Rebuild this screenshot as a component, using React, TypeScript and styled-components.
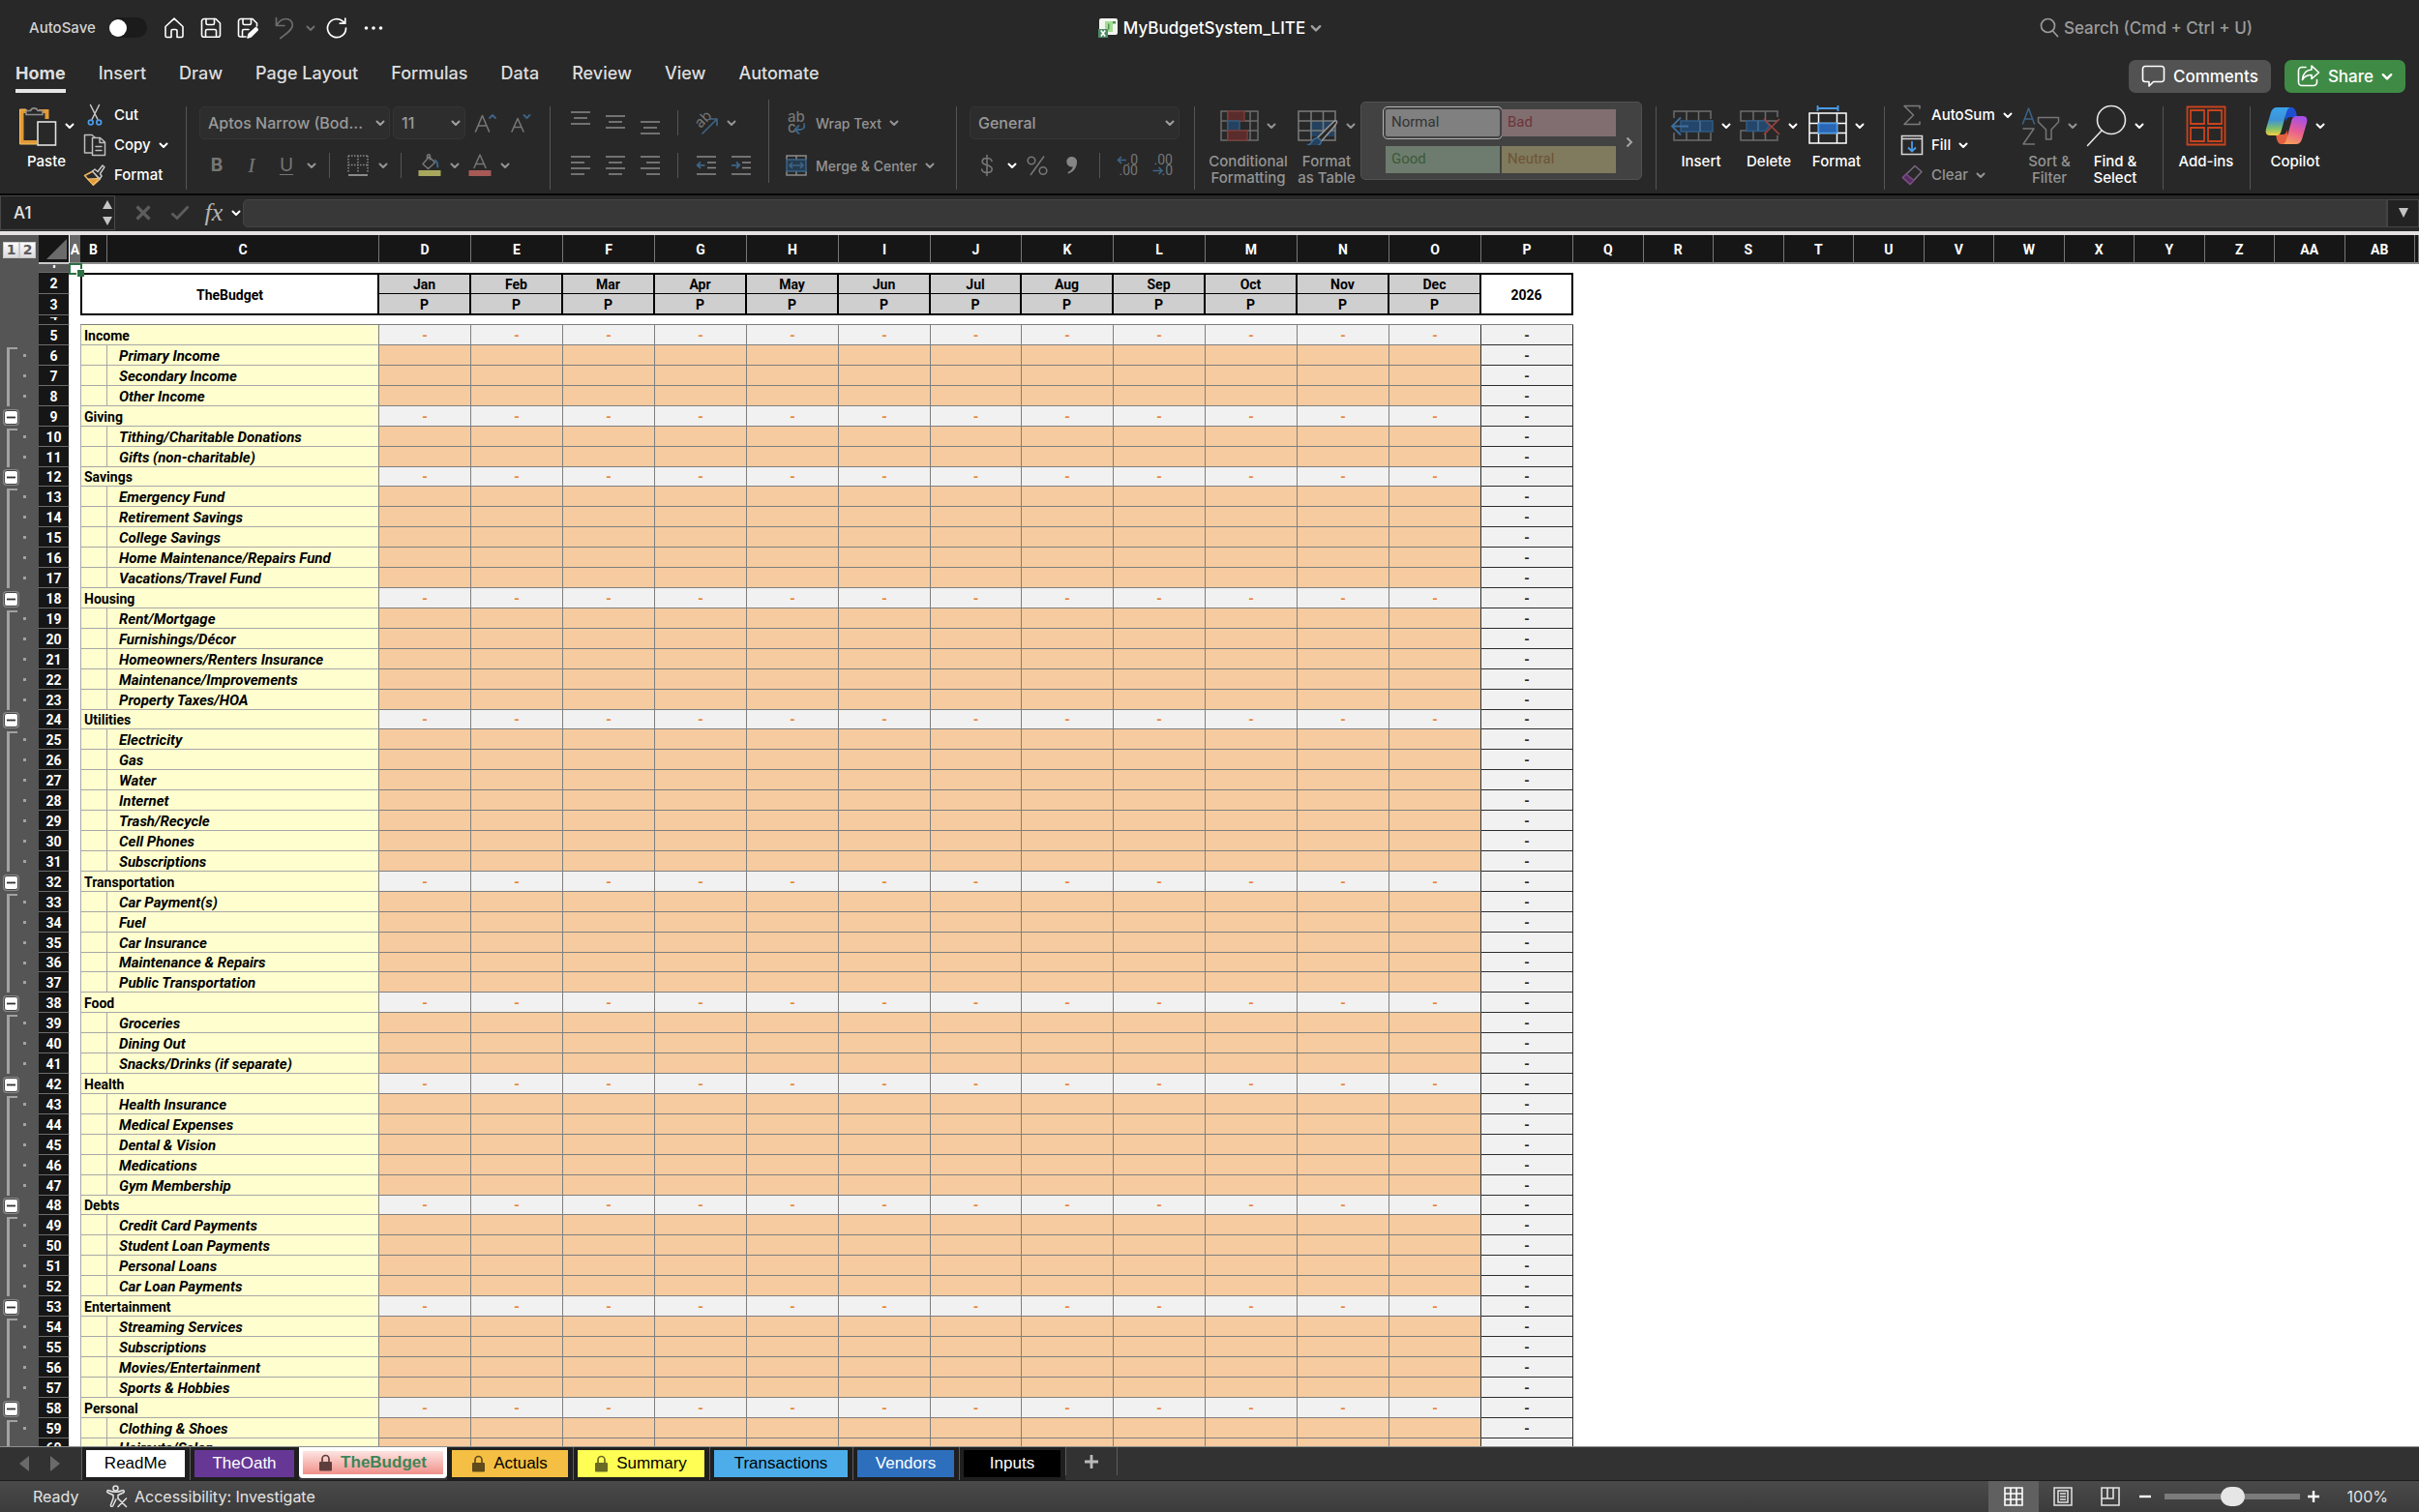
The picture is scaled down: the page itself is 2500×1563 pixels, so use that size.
import React from "react";
import styled, { createGlobalStyle, css } from "styled-components";

const ui = `Inter, "Liberation Sans", sans-serif`;
const sheetFont = `Roboto, "Liberation Sans", sans-serif`;
const tabFont = `"Liberation Sans", Arial, sans-serif`;

const GlobalStyle = createGlobalStyle`
  * { box-sizing: border-box; }
  body { margin: 0; background: #282828; font-family: ${ui}; color: #fff; overflow: hidden; }
  button, select, input { font: inherit; color: inherit; margin: 0; padding: 0; border: 0; background: none; }
  svg { display: block; flex: none; }
`;

/* ---------- shared pieces ---------- */

const Window = styled.div`
  display: flex;
  flex-direction: column;
  height: 100vh;
  background: #282828;
`;

const Chevron = ({ color = "#fff", w = 10 }: { color?: string; w?: number }) => (
  <svg width={w} height={w} viewBox="0 0 10 10" fill="none" stroke={color} strokeWidth="2" strokeLinecap="round" strokeLinejoin="round">
    <path d="M1.5 3.5 5 7l3.5-3.5" />
  </svg>
);

const IconButton = styled.button<{ $w?: number }>`
  flex: none;
  width: ${(p) => p.$w ?? 36}px;
  height: 32px;
  display: flex;
  align-items: center;
  justify-content: center;
`;

/* ---------- title bar ---------- */

const TitleBar = styled.header`
  flex: none;
  height: 57px;
  display: grid;
  grid-template-columns: 1fr auto 1fr;
  align-items: center;
  padding: 0 172px 0 30px;
`;
const Quick = styled.div`
  display: flex;
  align-items: center;
`;
const AutoSave = styled.label`
  display: flex;
  align-items: center;
  justify-content: space-between;
  width: 122px;
  margin-right: 9px;
  font-size: 15px;
  font-weight: 500;
  color: #d2d2d2;
`;
const Toggle = styled.input`
  appearance: none;
  width: 39px;
  height: 21px;
  border-radius: 11px;
  background: #1b1b1b;
  display: flex;
  align-items: center;
  &::before {
    content: "";
    width: 18px;
    height: 18px;
    border-radius: 50%;
    background: #fff;
  }
`;
const DocTitle = styled.button`
  display: flex;
  align-items: center;
  gap: 5px;
  margin-left: 142px;
  font-size: 17px;
  font-weight: 500;
  line-height: 22px;
`;
const Search = styled.button`
  justify-self: end;
  display: flex;
  align-items: center;
  gap: 5px;
  font-size: 17px;
  font-weight: 500;
  line-height: 22px;
  color: #9b9b9b;
`;

/* ---------- ribbon tabs ---------- */

const TabRow = styled.nav`
  flex: none;
  height: 43px;
  display: flex;
  align-items: flex-start;
  justify-content: space-between;
  padding: 5px 14px 0 16px;
`;
const TabList = styled.div`
  display: flex;
  gap: 34px;
`;
const RibbonTab = styled.button<{ $on?: boolean }>`
  height: 34px;
  padding-bottom: 2px;
  font-size: 18px;
  line-height: 24px;
  font-weight: ${(p) => (p.$on ? 700 : 500)};
  color: #dedede;
  border-bottom: 4px solid ${(p) => (p.$on ? "#e6e6e6" : "transparent")};
`;
const Actions = styled.div`
  display: flex;
  gap: 14px;
`;
const Pill = styled.button<{ $green?: boolean }>`
  height: 34px;
  padding: 0 13px;
  display: flex;
  align-items: center;
  gap: 8px;
  border-radius: 7px;
  font-size: 17px;
  font-weight: 500;
  background: ${(p) => (p.$green ? "#3f8b45" : "#525252")};
`;

/* ---------- ribbon ---------- */

const Ribbon = styled.section`
  flex: none;
  height: 102px;
  display: flex;
  border-bottom: 2px solid #060606;
  overflow: hidden;
`;
const Group = styled.div<{ $w?: number; $pl?: number }>`
  flex: 0 0 ${(p) => (p.$w ? p.$w + "px" : "auto")};
  display: flex;
  padding-left: ${(p) => p.$pl ?? 0}px;
`;
const Divider = styled.div<{ $top?: number }>`
  flex: none;
  width: 1px;
  height: 86px;
  margin-top: ${(p) => p.$top ?? 10}px;
  background: #555;
`;
const Rows = styled.div`
  display: flex;
  flex-direction: column;
  gap: 10px;
  padding-top: 10px;
`;
const Row = styled.div`
  display: flex;
  align-items: center;
  height: 34px;
`;
const SmallSep = styled.div`
  flex: none;
  width: 1px;
  height: 26px;
  margin: 0 11px 0 10px;
  background: #555;
`;
const SelectBox = styled.div<{ $w: number }>`
  position: relative;
  flex: none;
  width: ${(p) => p.$w}px;
  height: 34px;
  margin-right: 3px;
  svg {
    position: absolute;
    right: 5px;
    top: 12px;
    pointer-events: none;
  }
`;
const Select = styled.select`
  appearance: none;
  width: 100%;
  height: 34px;
  padding: 0 20px 0 8px;
  border-radius: 5px;
  background: #2d2d2d;
  border: 1px solid #353535;
  font-size: 16px;
  font-weight: 500;
  color: #9a9a9a;
`;
const BigButton = styled.button<{ $w: number; $dim?: boolean }>`
  flex: none;
  width: ${(p) => p.$w}px;
  height: 100px;
  padding-top: 8px;
  display: flex;
  flex-direction: column;
  align-items: center;
  font-size: 15px;
  line-height: 17px;
  font-weight: 500;
  color: ${(p) => (p.$dim ? "#949494" : "#fff")};
`;
const BigIcon = styled.span`
  height: 44px;
  margin-bottom: 6px;
  display: flex;
  align-items: center;
  gap: 8px;
`;
const List = styled.div<{ $w?: number }>`
  flex: none;
  width: ${(p) => (p.$w ? p.$w + "px" : "auto")};
  display: flex;
  flex-direction: column;
  align-items: flex-start;
  padding: 3px 0 0 2px;
`;
const ListButton = styled.button<{ $dim?: boolean; $tall?: boolean }>`
  height: ${(p) => (p.$tall ? 34 : 31)}px;
  display: flex;
  align-items: center;
  gap: 8px;
  font-size: ${(p) => (p.$tall ? 14 : 15)}px;
  font-weight: 500;
  color: ${(p) => (p.$dim ? "#949494" : "#fff")};
`;
const Slot = styled.span`
  width: 24px;
  display: flex;
  justify-content: center;
`;
const Gallery = styled.div`
  flex: none;
  width: 291px;
  height: 81px;
  margin: 5px 0 0 2px;
  padding: 2px 8px 0 25px;
  border-radius: 5px;
  border: 1px solid #515151;
  background: #424242;
  display: flex;
  align-items: center;
  justify-content: space-between;
`;
const Swatches = styled.div`
  display: grid;
  grid-template-columns: 118px 118px;
  grid-template-rows: 28px 28px;
  gap: 10px 2px;
  align-self: flex-start;
  padding-top: 5px;
`;
const Swatch = styled.button<{ $bg: string; $fg: string; $on?: boolean }>`
  text-align: left;
  padding: 0 0 2px 6px;
  font-family: ${sheetFont};
  font-size: 15px;
  background: ${(p) => p.$bg};
  color: ${(p) => p.$fg};
  ${(p) => p.$on && css`outline: 1px solid #b4b4b4; outline-offset: 2px; border-radius: 2px;`}
`;

/* ---------- formula bar ---------- */

const FormulaBar = styled.div`
  flex: none;
  height: 36px;
  display: flex;
  align-items: center;
  background: #282828;
`;
const NameBox = styled.div`
  width: 119px;
  height: 36px;
  padding: 0 2px 0 13px;
  display: flex;
  align-items: center;
  justify-content: space-between;
  border: 1px solid #484848;
  background: #242424;
`;
const NameInput = styled.input`
  width: 80px;
  font-size: 17px;
  font-weight: 500;
  color: #e4e4e4;
  outline: 0;
`;
const FormulaTools = styled.div`
  width: 132px;
  padding-left: 10px;
  display: flex;
  align-items: center;
`;
const Fx = styled.span`
  font: italic 26px/28px "Liberation Serif", serif;
  color: #b4b4b4;
`;
const FormulaInput = styled.input`
  flex: 1;
  height: 29px;
  border-radius: 5px 0 0 5px;
  background: #383838;
  border: 1px solid #444;
  outline: 0;
`;
const DropButton = styled.button`
  width: 33px;
  height: 29px;
  display: grid;
  place-items: center;
  background: #222;
  border: 1px solid #444;
`;

/* ---------- sheet ---------- */

const SheetArea = styled.main`
  flex: 1 1 0;
  min-height: 0;
  overflow: hidden;
  background: #fff;
  border-top: 4px solid #e6e2e4;
  margin-top: 1px;
`;
const Sheet = styled.table`
  width: 100%;
  table-layout: fixed;
  border-collapse: separate;
  border-spacing: 0;
  font-family: ${sheetFont};
  font-size: 14px;
  font-weight: 700;
  line-height: 18px;
  color: #000;
  td, th { padding: 1px 0 0; }
`;
const ColHead = styled.th<{ $active?: boolean }>`
  height: 30px;
  background: ${(p) => (p.$active ? "#686868" : "#161616")};
  color: #fff;
  border-right: ${(p) => (p.$active ? "0" : "1px solid #777")};
  border-bottom: 2px solid #8d8d8d;
  text-align: center;
  font-weight: 700;
`;
const GutterHead = styled.td`
  background: #555;
  && { padding-left: 3px; }
`;
const Levels = styled.div`
  display: flex;
`;
const Level = styled.button`
  width: 17px;
  height: 17px;
  background: linear-gradient(#fdfdfd, #d9d9de);
  border: 1px solid #c9c9c9;
  font-family: "DejaVu Sans", sans-serif;
  font-size: 14px;
  line-height: 15px;
  color: #5a5a5a;
`;
const Corner = styled.th`
  background: #161616;
  border-right: 1px solid #fff;
  border-bottom: 2px solid #c9c9c9;
  svg { margin-left: 8px; }
`;
const Gutter = styled.td<{ $line?: boolean; $first?: boolean }>`
  position: relative;
  background: #555;
  ${(p) =>
    p.$line &&
    css`
      &::before {
        content: "";
        position: absolute;
        left: 7px;
        top: ${p.$first ? 2 : 0}px;
        bottom: 0;
        width: 8px;
        border-left: 3px solid #a2a2a2;
        border-top: ${p.$first ? "2px solid #a2a2a2" : "0"};
      }
      &::after {
        content: "";
        position: absolute;
        left: 24px;
        top: 9px;
        width: 3px;
        height: 3px;
        background: #a2a2a2;
      }
    `}
`;
const Collapse = styled.button`
  display: grid;
  place-items: center;
  width: 15px;
  height: 15px;
  margin-left: 4px;
  background: #fff;
  border: 1px solid #444;
  border-radius: 3px;
  box-shadow: 0 0 0 1px #8a8a8a;
`;
const RowHead = styled.th<{ $active?: boolean }>`
  background: ${(p) => (p.$active ? "#555" : "#161616")};
  color: #fff;
  border-bottom: 1px solid #6d6d6d;
  border-right: 1px solid #fff;
  text-align: center;
`;
const Clip = styled.div`
  height: 7px;
  overflow: hidden;
  display: flex;
  align-items: flex-end;
  justify-content: center;
`;
const Tr = styled.tr<{ $h: number }>`
  height: ${(p) => p.$h}px;
`;
const Blank = styled.td<{ $line?: boolean }>`
  position: relative;
  ${(p) => p.$line && "border-bottom: 1px solid #7f7f7f;"}
`;
const Cursor = styled.div`
  position: absolute;
  left: -1px;
  top: -1px;
  width: 14px;
  height: 12px;
  border: 2px solid #2d7044;
  &::after {
    content: "";
    position: absolute;
    right: -4px;
    bottom: -4px;
    z-index: 1;
    width: 7px;
    height: 7px;
    background: #2d7044;
    border: solid #fff;
    border-width: 1px 0 0 1px;
  }
`;
const Banner = styled.th<{ $left?: boolean }>`
  border: solid #000;
  border-width: 2px 2px 2px ${(p) => (p.$left ? 2 : 0)}px;
  text-align: center;
`;
const MonthCell = styled.th<{ $sub?: boolean }>`
  background: #cfcfcf;
  border: solid #000;
  border-width: ${(p) => (p.$sub ? "0 2px 2px 0" : "2px 2px 1px 0")};
  text-align: center;
`;
const Category = styled.th`
  background: #fefecf;
  border: solid #a8a8a8;
  border-width: 0 1px 1px 1px;
  border-right-color: #7f7f7f;
  text-align: left;
  && { padding-left: 3px; }
`;
const Indent = styled.td`
  background: #fefecf;
  border: solid #a8a8a8;
  border-width: 0 1px 1px 1px;
`;
const Item = styled.th`
  background: #fefecf;
  border: solid #a8a8a8;
  border-width: 0 1px 1px 0;
  border-right-color: #7f7f7f;
  text-align: left;
  font-size: 15px;
  font-style: italic;
  white-space: nowrap;
  && { padding-left: 12px; }
`;
const Amount = styled.td<{ $kind: "sum" | "input" | "total"; $edge?: boolean }>`
  text-align: center;
  border: solid #7f7f7f;
  border-width: 0 1px 1px 0;
  background: ${(p) => (p.$kind === "input" ? "#f6cb9f" : "#f1f1f1")};
  color: ${(p) => (p.$kind === "sum" ? "#e9812f" : "#222")};
  ${(p) => p.$kind === "total" && "border-color: #2c2c2c;"}
  ${(p) => p.$edge && "border-right-color: #2c2c2c;"}
`;

/* ---------- sheet tabs ---------- */

const TabBar = styled.nav`
  flex: none;
  height: 36px;
  display: flex;
  background: #323232;
  border-top: 1px solid #8b908e;
  border-bottom: 1px solid #1c1c1c;
`;
const NavArrows = styled.div`
  width: 84px;
  padding-left: 20px;
  display: flex;
  align-items: center;
  gap: 22px;
`;
const SheetTabs = styled.div`
  display: flex;
  background: #1f1f1f;
`;
const TabSlot = styled.div<{ $line?: boolean }>`
  padding: 3px 5px 0 4px;
  border-left: 1px solid ${(p) => (p.$line ? "#5d5d5d" : "transparent")};
`;
const SheetTab = styled.button<{ $bg: string; $fg: string; $w: number }>`
  width: ${(p) => p.$w}px;
  height: 28px;
  display: flex;
  align-items: center;
  justify-content: center;
  gap: 9px;
  background: ${(p) => p.$bg};
  color: ${(p) => p.$fg};
  font-family: ${tabFont};
  font-size: 17px;
`;
const ActiveTab = styled(SheetTab)`
  height: 32px;
  border: 4px solid #fff;
  border-radius: 0 0 4px 4px;
  font-weight: 700;
`;
const ActiveSlot = styled.div`
  background: #323232;
`;
const AddSheet = styled.button`
  width: 54px;
  height: 29px;
  border: solid #5d5d5d;
  border-width: 0 1px;
  display: grid;
  place-items: center;
`;

/* ---------- status bar ---------- */

const StatusBar = styled.footer`
  flex: none;
  height: 32px;
  display: flex;
  justify-content: space-between;
  padding: 0 32px 0 34px;
  background: linear-gradient(#4a4a4a, #3b3b3b);
  font-size: 16px;
  color: #e4e4e4;
`;
const StatusSide = styled.div`
  display: flex;
  align-items: center;
`;
const StatusText = styled.span`
  width: 76px;
`;
const A11yButton = styled.button`
  display: flex;
  align-items: center;
  gap: 7px;
`;
const ViewButton = styled.button<{ $on?: boolean }>`
  width: ${(p) => (p.$on ? 52 : 49)}px;
  height: 32px;
  display: grid;
  place-items: center;
  background: ${(p) => (p.$on ? "#606060" : "none")};
`;
const Zoom = styled.input`
  appearance: none;
  width: 140px;
  height: 20px;
  margin: 0 8px;
  background: linear-gradient(#7b7b7b, #7b7b7b) center / 100% 6px no-repeat;
  &::-webkit-slider-thumb {
    appearance: none;
    width: 25px;
    height: 20px;
    border-radius: 10px;
    background: #e6e6e6;
  }
`;
const Percent = styled.output`
  width: 71px;
  text-align: right;
`;

/* ---------- icons ---------- */

const line = { fill: "none", strokeLinecap: "round", strokeLinejoin: "round" } as const;
const GREY = "#767676";
const BLUE = "#3d6486";

const HomeIcon = () => (
  <svg width="22" height="22" viewBox="0 0 22 22" {...line} stroke="#fff" strokeWidth="1.6">
    <path d="M2 9.5 11 1.2l9 8.3V19a1.5 1.5 0 0 1-1.5 1.5H14V14a1.5 1.5 0 0 0-1.5-1.5h-3A1.5 1.5 0 0 0 8 14v6.5H3.5A1.5 1.5 0 0 1 2 19z" />
  </svg>
);
const SaveIcon = ({ edit }: { edit?: boolean }) => (
  <svg width="22" height="22" viewBox="0 0 22 22" {...line} stroke="#fff" strokeWidth="1.6">
    <path d={edit ? "M9 20H3.5A2 2 0 0 1 1.500 18V4a2.500 2.500 0 0 1 2.500-2.500h12L20.500 6v3" : "M4 1.500h12L20.500 6v12a2.300 2.300 0 0 1-2.300 2.300H3.800A2.300 2.300 0 0 1 1.500 18V4A2.500 2.500 0 0 1 4 1.500z"} />
    <path d="M6 1.500V6a1.500 1.500 0 0 0 1.500 1.500H13A1.500 1.500 0 0 0 14.500 6V1.500" />
    {edit ? (
      <>
        <path d="M5.500 20v-6A1.500 1.500 0 0 1 7 12.500h5" />
        <path d="m11 21 1.200-4 7.300-6.500 2 2.200-7 7z" fill="#fff" />
      </>
    ) : (
      <path d="M5.500 20v-6A1.500 1.500 0 0 1 7 12.500h8a1.500 1.500 0 0 1 1.500 1.500v6" />
    )}
  </svg>
);
const UndoIcon = () => (
  <svg width="20" height="24" viewBox="0 0 20 24" {...line} stroke="#6d6d6d" strokeWidth="1.7">
    <path d="M1.500 1.500v8H10M1.800 9.200C4 5.500 7.500 2.500 11.500 2.500c4 0 6.800 2.900 6.800 6.500 0 5-6.300 8.500-12.500 13.500" />
  </svg>
);
const RedoIcon = () => (
  <svg width="22" height="22" viewBox="0 0 22 22" {...line} stroke="#fff" strokeWidth="1.7">
    <path d="M20.500 11A9.500 9.500 0 1 1 17.500 4.200l1.700 1.500M19.800 1.200v5h-5.500" />
  </svg>
);
const Dots = () => (
  <svg width="20" height="6" viewBox="0 0 20 6" fill="#fff">
    <circle cx="2.5" cy="3" r="1.8" /><circle cx="10" cy="3" r="1.8" /><circle cx="17.5" cy="3" r="1.8" />
  </svg>
);
const FileIcon = () => (
  <svg width="22" height="22" viewBox="0 0 22 22">
    <rect x="2" y="1" width="19" height="17" rx="2" fill="#f2f5f0" />
    <rect x="8" y="4" width="8" height="11" fill="#a5dd92" />
    <path d="M16 4h3v2.500h-3zM11 6.500h1.500v6H11z" fill="#4f8f56" />
    <rect x="1" y="12" width="10" height="9" fill="#4e8a66" />
    <path d="m3.800 13.500 4.400 6M8.200 13.500l-4.400 6" stroke="#fff" strokeWidth="1.6" />
  </svg>
);
const SearchIcon = () => (
  <svg width="20" height="22" viewBox="0 0 20 22" {...line} stroke="#9b9b9b" strokeWidth="1.7">
    <circle cx="8.5" cy="8.5" r="7" /><path d="m13.500 14 5 5.500" />
  </svg>
);
const CommentIcon = () => (
  <svg width="25" height="24" viewBox="0 0 25 24" {...line} stroke="#fff" strokeWidth="1.6">
    <path d="M4 1.500h17A2.500 2.500 0 0 1 23.500 4v11a2.500 2.500 0 0 1-2.500 2.500h-8.500L8 22v-4.500H4A2.500 2.500 0 0 1 1.500 15V4A2.500 2.500 0 0 1 4 1.500z" />
  </svg>
);
const ShareIcon = () => (
  <svg width="24" height="24" viewBox="0 0 24 24" {...line} stroke="#fff" strokeWidth="1.6">
    <path d="M9 2.500H5A3.500 3.500 0 0 0 1.500 6v12A3.500 3.500 0 0 0 5 21.500h12a3.500 3.500 0 0 0 3.500-3.500v-2.500" />
    <path d="M15 1l7.500 7-7.500 6.500v-4c-5 0-7.500 1.500-9.500 5 .5-6 3.500-10.200 9.500-10.500z" />
  </svg>
);
const PasteIcon = () => (
  <svg width="40" height="44" viewBox="0 0 40 44" fill="none">
    <path d="M9 7H3.500v32H19" stroke="#e39a35" strokeWidth="4" />
    <path d="M21 7h8.500v8" stroke="#e39a35" strokeWidth="4" />
    <path d="M8 5H1.500v36H19" stroke="#f3c56e" strokeWidth="1" />
    <path d="M8 10.500V6.500h4.500a4 4 0 0 1 7.500 0h5v4z" fill="#282828" stroke="#8d8d8d" strokeWidth="1.6" />
    <rect x="20" y="18" width="18.5" height="24" fill="#282828" stroke="#e0e0e0" strokeWidth="1.6" />
  </svg>
);
const CutIcon = () => (
  <svg width="16" height="24" viewBox="0 0 16 24" {...line}>
    <path d="M3.500 1.500 11 16.500M12.500 1.500 5 16.500" stroke="#c9c9c9" strokeWidth="1.5" />
    <circle cx="3.8" cy="19.5" r="2.4" stroke="#4a9be8" strokeWidth="1.7" />
    <circle cx="12.2" cy="19.5" r="2.4" stroke="#4a9be8" strokeWidth="1.7" />
  </svg>
);
const CopyIcon = () => (
  <svg width="24" height="24" viewBox="0 0 24 24" {...line} stroke="#bdbdbd" strokeWidth="1.5">
    <path d="M9 20H1.500V1.500H9L12 4" />
    <path d="M9.500 4.500h8L22.500 9v13.500h-13zM17 4.500V9.500h5.500M13 13.500h6M13 17.500h6" />
  </svg>
);
const BrushIcon = () => (
  <svg width="24" height="24" viewBox="0 0 24 24" {...line}>
    <path d="M1.500 12.500 10 8l7 8.500-6.500 5.700z" stroke="#f0b860" strokeWidth="1.5" />
    <path d="m5 16 11-.5-5.500 6.500z" fill="#e59a35" stroke="#f3c777" />
    <path d="M9.500 8 12 6l3 2.500 5-6.500 2 1.700-4.500 6.800L19 13l-2 3z" stroke="#c9c9c9" strokeWidth="1.5" fill="#282828" />
  </svg>
);
const FontSizeIcon = ({ down }: { down?: boolean }) => (
  <svg width="24" height="24" viewBox="0 0 24 24" {...line}>
    <path d={down ? "M3 21 9 7.500 15 21M5 16.500h8" : "M1.500 21 8.500 4.500 15.500 21M4 15h9"} stroke={GREY} strokeWidth="1.6" />
    <path d={down ? "m15.500 4 3 3 3-3" : "m16 7 3-3 3 3"} stroke={BLUE} strokeWidth="1.8" />
  </svg>
);
const Letter = styled.span<{ $kind: "b" | "i" | "u" }>`
  font-size: 19px;
  line-height: 20px;
  color: ${GREY};
  ${(p) => p.$kind === "b" && "font-weight: 700;"}
  ${(p) => p.$kind === "i" && `font-family: "Liberation Serif", serif; font-style: italic; font-size: 22px;`}
  ${(p) => p.$kind === "u" && "text-decoration: underline; text-underline-offset: 3px; text-decoration-thickness: 1px;"}
`;
const BordersIcon = () => (
  <svg width="22" height="24" viewBox="0 0 22 24" fill="none" stroke="#8a8a8a" strokeWidth="1.5">
    <path d="M1 2h20M1 2v18M21 2v18M11 2v18M1 11.500h20" strokeDasharray="1.5 1.5" />
    <path d="M1 22h20" strokeWidth="2" />
  </svg>
);
const FillColorIcon = () => (
  <svg width="24" height="24" viewBox="0 0 24 24" {...line}>
    <path d="M5 10.500 11.500 3l6 6-7 6.500zM9.500 5V2.500A1.500 1.500 0 0 1 12.500 2v4" stroke={GREY} strokeWidth="1.5" />
    <path d="M17.500 6.500c2.500 1.500 3 4 2.800 7" stroke={BLUE} strokeWidth="2" />
    <rect x="0.5" y="17" width="23" height="6" fill="#a7a75e" />
  </svg>
);
const FontColorIcon = () => (
  <svg width="24" height="24" viewBox="0 0 24 24" {...line}>
    <path d="M6 14.500 12 1l6 13.500M8 10.500h8" stroke={GREY} strokeWidth="1.5" />
    <rect x="0.5" y="17" width="23" height="6" fill="#a85a56" />
  </svg>
);
const Lines = ({ d }: { d: string }) => (
  <svg width="22" height="34" viewBox="0 0 22 34" fill="none" stroke="#8a8a8a" strokeWidth="1.5"><path d={d} /></svg>
);
const OrientIcon = () => (
  <svg width="26" height="26" viewBox="0 0 26 26" {...line}>
    <text x="0" y="0" transform="translate(7 19) rotate(-45)" fontSize="15" fontFamily="Inter, sans-serif" fill={GREY}>ab</text>
    <path d="M9 24 24 9M17.500 9H24v6.500" stroke={BLUE} strokeWidth="1.7" />
  </svg>
);
const IndentIcon = ({ out }: { out?: boolean }) => (
  <svg width="22" height="22" viewBox="0 0 22 22" fill="none" strokeWidth="1.5">
    <path d="M1 2h20M12 8h9M12 13.500h9M1 20h20" stroke="#8a8a8a" />
    <path d={out ? "M9.500 10.800H2M5 7.500l-3.300 3.300L5 14" : "M1 10.800h8M6 7.500l3.300 3.300L6 14"} stroke={BLUE} strokeWidth="1.8" />
  </svg>
);
const WrapIcon = () => (
  <svg width="22" height="26" viewBox="0 0 22 26" {...line}>
    <text x="2" y="12" fontSize="15" fontFamily="Inter, sans-serif" fill={GREY}>ab</text>
    <text x="2" y="23" fontSize="15" fontFamily="Inter, sans-serif" fill={GREY}>c</text>
    <path d="M19 14c1.500 4-1.500 6-4 6h-5M13.500 16 9.500 20l4 4" stroke={BLUE} strokeWidth="1.8" />
  </svg>
);
const MergeIcon = () => (
  <svg width="24" height="24" viewBox="0 0 24 24" fill="none" strokeWidth="1.5">
    <path d="M2 6V2h20v4M12 2v4M2 18v4h20v-4M12 18v4" stroke="#8a8a8a" />
    <rect x="2" y="6" width="20" height="12" stroke={BLUE} fill="#253c50" />
    <path d="M5 12h14M8 9l-3 3 3 3M16 9l3 3-3 3" stroke={BLUE} strokeWidth="1.7" />
  </svg>
);
const PercentIcon = () => (
  <svg width="22" height="22" viewBox="0 0 22 22" fill="none" stroke={GREY} strokeWidth="1.6">
    <circle cx="5" cy="6" r="3.8" /><circle cx="17" cy="16.5" r="3.8" /><path d="M18 1.500 4 21" />
  </svg>
);
const DollarIcon = () => (
  <svg width="14" height="24" viewBox="0 0 14 24" {...line} stroke={GREY} strokeWidth="1.6">
    <path d="M7 1.500v21M12 7.500C11.500 5.500 9.700 4.500 7 4.500 4 4.500 2.200 6 2.200 8c0 5 10 2.500 10 7.800 0 2.200-2 3.700-5.200 3.700-3 0-5-1.200-5.300-3.500" />
  </svg>
);
const CommaIcon = () => (
  <svg width="12" height="20" viewBox="0 0 12 20" fill="#868686">
    <path d="M6 1a5 5 0 0 1 5 5.500c0 5.500-3.500 10.500-9 12l-.5-1.500c3-1.200 5-3.500 5.300-5.800A5.200 5.200 0 1 1 6 1z" />
  </svg>
);
const DecimalIcon = ({ less }: { less?: boolean }) => (
  <svg width="24" height="26" viewBox="0 0 24 26" fontSize="14" fontFamily="Roboto, sans-serif" fill={GREY}>
    <text x="22" y="12" textAnchor="end">{less ? ".00" : ".0"}</text>
    <text x="22" y="23" textAnchor="end">{less ? ".0" : ".00"}</text>
    <path d={less ? "M1.500 18.500h9M7.500 15l3.500 3.500L7.500 22" : "M10 7.500H2M5 4 1.500 7.500 5 11"} fill="none" stroke={BLUE} strokeWidth="1.7" />
  </svg>
);
const CondIcon = () => (
  <svg width="40" height="32" viewBox="0 0 40 32" fill="none" stroke="#6c6c6c" strokeWidth="1.5">
    <path d="M1 1h38v30H1zM8 1v30M31 1v30M1 11h38M1 21h38" />
    <path d="M8 1h17v10H8z" fill="#5a2c2b" stroke="#7a3b3a" /><path d="M8 11h12v10H8z" fill="#24425f" stroke="#33597b" /><path d="M8 21h20v10H8z" fill="#5a2c2b" stroke="#7a3b3a" />
  </svg>
);
const TableIcon = () => (
  <svg width="42" height="40" viewBox="0 0 42 40" fill="none" stroke="#7b7b7b" strokeWidth="1.5">
    <path d="M13 15h26v16H13z" fill="#24425f" stroke="none" />
    <path d="M1 5h38v30H1zM14 5v30M26.500 5v30M1 15h38M1 25h38" />
    <path d="M40 15c2 1-1 4-3 7L24.500 36l-4-3.500L34 19c3-3 5-5 6-4z" fill="#282828" stroke="#999" />
    <path d="M20 32.500c3 .5 5 3 4 5.500-2.500 4-8 4-12.500 1.500 4-.5 3-6.500 8.500-7z" fill="#24425f" stroke="#3e6c95" />
  </svg>
);
const InsertIcon = () => (
  <svg width="44" height="34" viewBox="0 0 44 34" fill="none" stroke="#6c6c6c" strokeWidth="1.5">
    <path d="M3 9V2h38v8M16 2v10M28.500 2v10M3 24v8h38v-8M16 22v10M28.500 22v10" />
    <path d="M10 12h33v11H10z" fill="#24466a" stroke="#2f5b85" /><path d="M30 12v11" stroke="#4a7299" />
    <path d="M18 17.500H1.500M10 8.500l-9 9 9 9" stroke="#3d6f9f" strokeWidth="1.8" />
  </svg>
);
const DeleteIcon = () => (
  <svg width="42" height="34" viewBox="0 0 42 34" fill="none" stroke="#6c6c6c" strokeWidth="1.5">
    <path d="M39 8V2H1v10h38M14 2v10M26.500 2v10M39 27v5H1V22h24M14 22v10M26.500 25v7" />
    <path d="M7 12h19l5 5-5 5.500H7z" fill="#24466a" stroke="#2f5b85" /><path d="M19 12v10" stroke="#4a7299" />
    <path d="m25 10 16 16M41 10 25 26" stroke="#9b4240" strokeWidth="1.7" />
  </svg>
);
const FormatIcon = () => (
  <svg width="40" height="42" viewBox="0 0 40 42" fill="none" stroke="#fff" strokeWidth="1.5">
    <path d="M1 8h38v31H1zM10.500 8v31M29.500 8v31M1 18.500h38M1 28.500h38" />
    <path d="M10.500 18.500h19v10h-19z" fill="#2a66b4" stroke="#4a9be8" />
    <path d="M9.500 3h21M9.500 0v6M30.500 0v6" stroke="#4a9be8" strokeWidth="1.8" />
  </svg>
);
const SigmaIcon = () => (
  <svg width="20" height="22" viewBox="0 0 20 22" {...line} stroke="#7b7b7b" strokeWidth="1.5"><path d="M18 4V1.500H2L11.500 11 2 20.500h16V18" /></svg>
);
const FillIcon = () => (
  <svg width="24" height="22" viewBox="0 0 24 22" fill="none" stroke="#d6d6d6" strokeWidth="1.6">
    <path d="M1.500 1.500h21v19h-21zM1.500 4.500h21" /><path d="M12 7v10M8 13.500l4 4 4-4" stroke="#4a9be8" strokeWidth="1.8" />
  </svg>
);
const EraserIcon = () => (
  <svg width="22" height="22" viewBox="0 0 22 22" {...line} strokeWidth="1.5">
    <path d="M1.500 13.500 14 1.500l7 6L9 20.500z" stroke="#7b6a80" /><path d="M1.500 13.500 5 10l8 6.500-4 4z" fill="#54305e" stroke="#7d4a88" />
  </svg>
);
const SortIcon = () => (
  <svg width="40" height="42" viewBox="0 0 40 42" {...line} strokeWidth="1.5">
    <path d="M1.500 19 7.500 3l6 16M3.500 14h8" stroke={BLUE} /><path d="M2 24h11L2 40h11.500" stroke={GREY} />
    <path d="M17.500 12.500h21V17L31 25v10h-5.500V25l-8-8z" stroke={GREY} />
  </svg>
);
const FindIcon = () => (
  <svg width="42" height="44" viewBox="0 0 42 44" {...line} stroke="#e6e6e6" strokeWidth="1.6"><circle cx="26" cy="16" r="14.5" /><path d="M16 27 1.500 42.500" /></svg>
);
const AddinsIcon = () => (
  <svg width="42" height="42" viewBox="0 0 42 42" fill="none" stroke="#c8431d" strokeWidth="1.8">
    <path d="M1.500 1.500h39v39h-39zM5 5h14v14H5zM23 5h14v14H23zM5 23h14v14H5zM23 23h14v14H23z" />
  </svg>
);
const CopilotIcon = () => (
  <svg width="44" height="40" viewBox="0 0 44 40">
    <defs>
      <linearGradient id="cpa" x1="0" y1="0" x2="0" y2="1"><stop offset="0" stopColor="#3aa4ea" /><stop offset=".45" stopColor="#3d92d8" /><stop offset=".75" stopColor="#7fc06a" /><stop offset="1" stopColor="#f3cf3f" /></linearGradient>
      <linearGradient id="cpb" x1=".6" y1="0" x2=".3" y2="1"><stop offset="0" stopColor="#a64fe8" /><stop offset=".5" stopColor="#e95d92" /><stop offset="1" stopColor="#f6a05a" /></linearGradient>
    </defs>
    <path d="M21 1h6c3 0 4 2 5 5l1 5h-7c-3 0-4 2-5 5z" fill="#1d4fd0" />
    <path d="M23 39h-6c-3 0-4-2-5-5l-1-5h7c3 0 4-2 5-5z" fill="#e2603f" />
    <path d="M12 1h15c-3 0-4 2-5 5l-5 18c-1 4-2 6-6 6H5c-4 0-5-3-4-7L6 6c1-3 3-5 6-5z" fill="url(#cpa)" />
    <path d="M32 39H17c3 0 4-2 5-5l5-18c1-4 2-6 6-6h6c4 0 5 3 4 7l-5 17c-1 3-3 5-6 5z" fill="url(#cpb)" />
  </svg>
);
const Tri = ({ d, w = 12, h = 10, color = "#b5b5b5" }: { d: string; w?: number; h?: number; color?: string }) => (
  <svg width={w} height={h} viewBox={`0 0 ${w} ${h}`} fill={color}><path d={d} /></svg>
);
const LockIcon = ({ color }: { color: string }) => (
  <svg width="13" height="18" viewBox="0 0 13 18"><path d="M3 8V5a3.500 3.500 0 0 1 7 0v3" fill="none" stroke={color} strokeWidth="1.7" /><rect x="0" y="8" width="13" height="9.5" rx="1" fill={color} /></svg>
);
const A11yIcon = () => (
  <svg width="22" height="24" viewBox="0 0 22 24" {...line} stroke="#e4e4e4" strokeWidth="1.5">
    <circle cx="9.5" cy="3.5" r="2.5" />
    <path d="M12 14.500v-4l5.500-2.500c1.500-1 .5-2.800-1-2.300-4.500 2-9.500 2-14 0-1.500-.5-2.500 1.300-1 2.300L7 10.500V14l-2.500 6.500c-.5 1.700 1.500 2.500 2.300 1l3-6.500M12 14l8.500 8.500M20.500 14 12 22.500" />
  </svg>
);
const GridIcon = () => (
  <svg width="20" height="20" viewBox="0 0 20 20" fill="none" stroke="#fff" strokeWidth="1.6"><path d="M1 1h18v18H1zM7 1v18M13 1v18M1 7h18M1 13h18" /></svg>
);
const PageIcon = () => (
  <svg width="20" height="20" viewBox="0 0 20 20" fill="none" stroke="#e2e2e2" strokeWidth="1.5"><path d="M1 1h18v18H1zM5 4h10v12H5zM7 7h6M7 10h6M7 13h6" /></svg>
);
const BreakIcon = () => (
  <svg width="20" height="20" viewBox="0 0 20 20" fill="none" stroke="#e2e2e2" strokeWidth="1.6"><path d="M1 1h18v18H1zM1 12h12V1M7 1v11" /></svg>
);
const Sign = ({ plus, color = "#fff", s = 12 }: { plus?: boolean; color?: string; s?: number }) => (
  <svg width={s} height={s} viewBox="0 0 12 12" stroke={color} strokeWidth="2.4"><path d={plus ? "M0 6h12M6 0v12" : "M0 6h12"} /></svg>
);

/* ---------- data ---------- */

const ribbonTabs = ["Home", "Insert", "Draw", "Page Layout", "Formulas", "Data", "Review", "View", "Automate"];
const months = ["Jan", "Feb", "Mar", "Apr", "May", "Jun", "Jul", "Aug", "Sep", "Oct", "Nov", "Dec"];
const columnNames = [..."ABCDEFGHIJKLMNOPQRSTUVWXYZ", "AA", "AB", ""];

const budget: [string, string[]][] = [
  ["Income", ["Primary Income", "Secondary Income", "Other Income"]],
  ["Giving", ["Tithing/Charitable Donations", "Gifts (non-charitable)"]],
  ["Savings", ["Emergency Fund", "Retirement Savings", "College Savings", "Home Maintenance/Repairs Fund", "Vacations/Travel Fund"]],
  ["Housing", ["Rent/Mortgage", "Furnishings/Décor", "Homeowners/Renters Insurance", "Maintenance/Improvements", "Property Taxes/HOA"]],
  ["Utilities", ["Electricity", "Gas", "Water", "Internet", "Trash/Recycle", "Cell Phones", "Subscriptions"]],
  ["Transportation", ["Car Payment(s)", "Fuel", "Car Insurance", "Maintenance & Repairs", "Public Transportation"]],
  ["Food", ["Groceries", "Dining Out", "Snacks/Drinks (if separate)"]],
  ["Health", ["Health Insurance", "Medical Expenses", "Dental & Vision", "Medications", "Gym Membership"]],
  ["Debts", ["Credit Card Payments", "Student Loan Payments", "Personal Loans", "Car Loan Payments"]],
  ["Entertainment", ["Streaming Services", "Subscriptions", "Movies/Entertainment", "Sports & Hobbies"]],
  ["Personal", ["Clothing & Shoes", "Haircuts/Salon"]],
];

type Line = { n: number; label: string; kind: "category" | "item"; first: boolean };
const lines: Line[] = [];
budget.forEach(([category, items]) => {
  lines.push({ n: lines.length + 5, label: category, kind: "category", first: false });
  items.forEach((label, i) => lines.push({ n: lines.length + 5, label, kind: "item", first: i === 0 }));
});

const sheetTabs = [
  { name: "ReadMe", bg: "#fff", fg: "#000", w: 102 },
  { name: "TheOath", bg: "#673796", fg: "#fff", w: 103 },
  { name: "TheBudget", bg: "linear-gradient(#fde4e1, #f0908a)", fg: "#3f8556", w: 153, lock: "#5e3e3c", active: true },
  { name: "Actuals", bg: "#f5bf43", fg: "#000", w: 120, lock: "#5f4a1c" },
  { name: "Summary", bg: "#fffe54", fg: "#000", w: 131, lock: "#6a6a25" },
  { name: "Transactions", bg: "#4cadea", fg: "#000", w: 138 },
  { name: "Vendors", bg: "#2d6fbd", fg: "#fff", w: 100 },
  { name: "Inputs", bg: "#000", fg: "#fff", w: 100 },
];

const DIM = "#949494";

/* ---------- views ---------- */

const TitleRow = () => (
  <TitleBar>
    <Quick>
      <AutoSave>AutoSave<Toggle type="checkbox" role="switch" /></AutoSave>
      <IconButton $w={38} aria-label="Home"><HomeIcon /></IconButton>
      <IconButton $w={38} aria-label="Save"><SaveIcon /></IconButton>
      <IconButton $w={38} aria-label="Save as"><SaveIcon edit /></IconButton>
      <IconButton $w={38} aria-label="Undo"><UndoIcon /></IconButton>
      <IconButton $w={16} aria-label="Undo list"><Chevron color="#6d6d6d" /></IconButton>
      <IconButton $w={38} aria-label="Redo"><RedoIcon /></IconButton>
      <IconButton $w={38} aria-label="More"><Dots /></IconButton>
    </Quick>
    <DocTitle><FileIcon />MyBudgetSystem_LITE<Chevron color="#a0a0a0" w={12} /></DocTitle>
    <Search><SearchIcon />Search (Cmd + Ctrl + U)</Search>
  </TitleBar>
);

const Tabs = () => (
  <TabRow>
    <TabList>
      {ribbonTabs.map((t, i) => <RibbonTab key={t} $on={i === 0}>{t}</RibbonTab>)}
    </TabList>
    <Actions>
      <Pill><CommentIcon />Comments</Pill>
      <Pill $green><ShareIcon />Share<Chevron w={12} /></Pill>
    </Actions>
  </TabRow>
);

const Big = ({ icon, label, w, dim, chevron = true }: { icon: React.ReactNode; label: string[]; w: number; dim?: boolean; chevron?: boolean }) => (
  <BigButton $w={w} $dim={dim}>
    <BigIcon>{icon}{chevron && <Chevron color={dim ? DIM : "#fff"} />}</BigIcon>
    {label.map((l) => <span key={l}>{l}</span>)}
  </BigButton>
);
const Small = ({ icon, label, chevron, dim, tall }: { icon: React.ReactNode; label: string; chevron?: boolean; dim?: boolean; tall?: boolean }) => (
  <ListButton $dim={dim} $tall={tall}>
    <Slot>{icon}</Slot>{label}{chevron && <Chevron color={dim ? DIM : "#fff"} />}
  </ListButton>
);
const Drop = ({ label, color = DIM }: { label: string; color?: string }) => (
  <IconButton $w={16} aria-label={label}><Chevron color={color} /></IconButton>
);

const RibbonView = () => (
  <Ribbon>
    <Group $w={192} $pl={12}>
      <Big icon={<PasteIcon />} label={["Paste"]} w={72} />
      <List>
        <Small icon={<CutIcon />} label="Cut" />
        <Small icon={<CopyIcon />} label="Copy" chevron />
        <Small icon={<BrushIcon />} label="Format" />
      </List>
    </Group>
    <Divider />
    <Group $w={375} $pl={13}>
      <Rows>
        <Row>
          <SelectBox $w={197}><Select aria-label="Font"><option>Aptos Narrow (Bod...</option></Select><Chevron color="#a0a0a0" /></SelectBox>
          <SelectBox $w={75}><Select aria-label="Font size"><option>11</option></Select><Chevron color="#a0a0a0" /></SelectBox>
          <IconButton aria-label="Grow font"><FontSizeIcon /></IconButton>
          <IconButton aria-label="Shrink font"><FontSizeIcon down /></IconButton>
        </Row>
        <Row>
          <IconButton aria-label="Bold"><Letter $kind="b">B</Letter></IconButton>
          <IconButton aria-label="Italic"><Letter $kind="i">I</Letter></IconButton>
          <IconButton aria-label="Underline"><Letter $kind="u">U</Letter></IconButton>
          <Drop label="Underline styles" />
          <SmallSep />
          <IconButton aria-label="Borders"><BordersIcon /></IconButton>
          <Drop label="Border styles" />
          <SmallSep />
          <IconButton aria-label="Fill color"><FillColorIcon /></IconButton>
          <Drop label="Fill colors" />
          <IconButton aria-label="Font color"><FontColorIcon /></IconButton>
          <Drop label="Font colors" />
        </Row>
      </Rows>
    </Group>
    <Divider />
    <Group $w={225} $pl={13}>
      <Rows>
        <Row>
          <IconButton aria-label="Top align"><Lines d="M1 6h20M4 12h14M1 18h20" /></IconButton>
          <IconButton aria-label="Middle align"><Lines d="M1 10h20M4 16h14M1 22h20" /></IconButton>
          <IconButton aria-label="Bottom align"><Lines d="M1 16h20M4 22h14M1 28h20" /></IconButton>
          <SmallSep />
          <IconButton aria-label="Orientation"><OrientIcon /></IconButton>
          <Drop label="Orientations" />
        </Row>
        <Row>
          <IconButton aria-label="Align left"><Lines d="M1 8h20M1 14h14M1 20h20M1 26h14" /></IconButton>
          <IconButton aria-label="Center"><Lines d="M1 8h20M4 14h14M1 20h20M4 26h14" /></IconButton>
          <IconButton aria-label="Align right"><Lines d="M1 8h20M7 14h14M1 20h20M7 26h14" /></IconButton>
          <SmallSep />
          <IconButton aria-label="Decrease indent"><IndentIcon out /></IconButton>
          <IconButton aria-label="Increase indent"><IndentIcon /></IconButton>
        </Row>
      </Rows>
    </Group>
    <Divider $top={3} />
    <Group $w={193} $pl={16}>
      <Rows>
        <Small icon={<WrapIcon />} label="Wrap Text" chevron dim tall />
        <Small icon={<MergeIcon />} label="Merge & Center" chevron dim tall />
      </Rows>
    </Group>
    <Divider />
    <Group $w={245} $pl={13}>
      <Rows>
        <Row>
          <SelectBox $w={217}><Select aria-label="Number format"><option>General</option></Select><Chevron color="#a0a0a0" /></SelectBox>
        </Row>
        <Row>
          <IconButton aria-label="Currency"><DollarIcon /></IconButton>
          <Drop label="Currencies" color="#fff" />
          <IconButton aria-label="Percent"><PercentIcon /></IconButton>
          <IconButton aria-label="Comma style"><CommaIcon /></IconButton>
          <SmallSep />
          <IconButton aria-label="Increase decimal"><DecimalIcon /></IconButton>
          <IconButton aria-label="Decrease decimal"><DecimalIcon less /></IconButton>
        </Row>
      </Rows>
    </Group>
    <Divider />
    <Group $w={476} $pl={7}>
      <Big icon={<CondIcon />} label={["Conditional", "Formatting"]} w={96} dim />
      <Big icon={<TableIcon />} label={["Format", "as Table"]} w={66} dim />
      <Gallery>
        <Swatches>
          <Swatch $bg="#808080" $fg="#333" $on>Normal</Swatch>
          <Swatch $bg="#806e70" $fg="#6e3538">Bad</Swatch>
          <Swatch $bg="#6d7c6f" $fg="#3c5a35">Good</Swatch>
          <Swatch $bg="#807a5e" $fg="#6d5436">Neutral</Swatch>
        </Swatches>
        <svg width="8" height="12" viewBox="0 0 8 12" fill="none" stroke="#a4a4a4" strokeWidth="2"><path d="m1.500 1.500 4.500 4.500-4.500 4.500" /></svg>
      </Gallery>
    </Group>
    <Divider />
    <Group $w={235} $pl={11}>
      <Big icon={<InsertIcon />} label={["Insert"]} w={70} />
      <Big icon={<DeleteIcon />} label={["Delete"]} w={70} />
      <Big icon={<FormatIcon />} label={["Format"]} w={70} />
    </Group>
    <Divider />
    <Group $w={287} $pl={14}>
      <List $w={122}>
        <Small icon={<SigmaIcon />} label="AutoSum" chevron />
        <Small icon={<FillIcon />} label="Fill" chevron />
        <Small icon={<EraserIcon />} label="Clear" chevron dim />
      </List>
      <Big icon={<SortIcon />} label={["Sort &", "Filter"]} w={68} dim />
      <Big icon={<FindIcon />} label={["Find &", "Select"]} w={68} />
    </Group>
    <Divider />
    <Group $w={89}><Big icon={<AddinsIcon />} label={["Add-ins"]} w={88} chevron={false} /></Group>
    <Divider />
    <Group><Big icon={<CopilotIcon />} label={["Copilot"]} w={92} /></Group>
  </Ribbon>
);

const Formula = () => (
  <FormulaBar>
    <NameBox>
      <NameInput aria-label="Name box" defaultValue="A1" />
      <svg width="10" height="26" viewBox="0 0 10 26" fill="#c4c4c4"><path d="M5 0l5 9H0zM0 17h10l-5 9z" /></svg>
    </NameBox>
    <FormulaTools>
      <IconButton $w={38} aria-label="Cancel">
        <svg width="16" height="16" viewBox="0 0 16 16" stroke="#5c5c5c" strokeWidth="3.2"><path d="M1.500 1.500l13 13M14.500 1.500l-13 13" /></svg>
      </IconButton>
      <IconButton $w={38} aria-label="Enter">
        <svg width="20" height="16" viewBox="0 0 20 16" fill="none" stroke="#5c5c5c" strokeWidth="3"><path d="M1.500 8.500 7 13.500 18.500 1.500" /></svg>
      </IconButton>
      <IconButton $w={32} aria-label="Insert function"><Fx>fx</Fx></IconButton>
      <IconButton $w={14} aria-label="Functions"><Chevron /></IconButton>
    </FormulaTools>
    <FormulaInput aria-label="Formula" />
    <DropButton aria-label="Expand formula bar"><Tri d="M1 0h10L6 10z" color="#c4c4c4" /></DropButton>
  </FormulaBar>
);

const SheetView = () => (
  <SheetArea>
    <Sheet>
      <colgroup>
        <col style={{ width: 40 }} />
        <col style={{ width: 32 }} />
        <col style={{ width: 11 }} />
        <col style={{ width: 28 }} />
        <col style={{ width: 281 }} />
        {months.map((m) => <col key={m} style={{ width: m === "Jul" ? 94 : 95 }} />)}
        <col style={{ width: 95 }} />
        {columnNames.slice(16, 28).map((c) => <col key={c} />)}
        <col style={{ width: 4 }} />
      </colgroup>
      <thead>
        <Tr $h={30}>
          <GutterHead><Levels><Level>1</Level><Level>2</Level></Levels></GutterHead>
          <Corner aria-label="Select all"><Tri w={21} h={21} d="M21 0v21H0z" color="#6b6b6b" /></Corner>
          {columnNames.map((c, i) => <ColHead key={i} scope="col" $active={i === 0}>{c}</ColHead>)}
        </Tr>
      </thead>
      <tbody>
        <Tr $h={9}>
          <Gutter /><RowHead $active><Clip>1</Clip></RowHead><Blank><Cursor /></Blank>
        </Tr>
        <Tr $h={22}>
          <Gutter /><RowHead>2</RowHead><Blank />
          <Banner colSpan={2} rowSpan={2} $left>TheBudget</Banner>
          {months.map((m) => <MonthCell key={m}>{m}</MonthCell>)}
          <Banner rowSpan={2}>2026</Banner>
        </Tr>
        <Tr $h={22}>
          <Gutter /><RowHead>3</RowHead><Blank />
          {months.map((m) => <MonthCell key={m} $sub>P</MonthCell>)}
        </Tr>
        <Tr $h={10}>
          <Gutter /><RowHead><Clip>4</Clip></RowHead><Blank />
          <Blank $line colSpan={15} />
        </Tr>
        {lines.map(({ n, label, kind, first }) => (
          <Tr key={n} $h={n % 12 === 0 ? 20 : 21}>
            <Gutter $line={kind === "item"} $first={first}>
              {kind === "category" && n > 5 && <Collapse aria-label="Collapse group"><Sign s={9} color="#333" /></Collapse>}
            </Gutter>
            <RowHead scope="row">{n}</RowHead>
            <Blank />
            {kind === "category" ? <Category colSpan={2}>{label}</Category> : <><Indent /><Item>{label}</Item></>}
            {months.map((m) => (
              <Amount key={m} $kind={kind === "category" ? "sum" : "input"} $edge={m === "Dec"}>{kind === "category" ? "-" : ""}</Amount>
            ))}
            <Amount $kind="total">-</Amount>
          </Tr>
        ))}
      </tbody>
    </Sheet>
  </SheetArea>
);

const SheetTabsView = () => (
  <TabBar>
    <NavArrows>
      <Tri w={10} h={16} d="M10 0v16L0 8z" color="#6a6a6a" />
      <Tri w={10} h={16} d="M0 0v16l10-8z" color="#6a6a6a" />
    </NavArrows>
    <SheetTabs>
      {sheetTabs.map((t, i) =>
        t.active ? (
          <ActiveSlot key={t.name}><ActiveTab $bg={t.bg} $fg={t.fg} $w={t.w}><LockIcon color={t.lock!} />{t.name}</ActiveTab></ActiveSlot>
        ) : (
          <TabSlot key={t.name} $line={i !== 3}>
            <SheetTab $bg={t.bg} $fg={t.fg} $w={t.w}>{t.lock && <LockIcon color={t.lock} />}{t.name}</SheetTab>
          </TabSlot>
        )
      )}
    </SheetTabs>
    <AddSheet aria-label="Add sheet"><Sign plus s={14} color="#b9b9b9" /></AddSheet>
  </TabBar>
);

const Status = () => (
  <StatusBar>
    <StatusSide>
      <StatusText>Ready</StatusText>
      <A11yButton><A11yIcon />Accessibility: Investigate</A11yButton>
    </StatusSide>
    <StatusSide>
      <ViewButton $on aria-label="Normal view"><GridIcon /></ViewButton>
      <ViewButton aria-label="Page layout view"><PageIcon /></ViewButton>
      <ViewButton aria-label="Page break preview"><BreakIcon /></ViewButton>
      <IconButton $w={24} aria-label="Zoom out"><Sign s={12} /></IconButton>
      <Zoom type="range" min={0} max={200} defaultValue={100} aria-label="Zoom" />
      <IconButton $w={12} aria-label="Zoom in"><Sign plus s={12} /></IconButton>
      <Percent>100%</Percent>
    </StatusSide>
  </StatusBar>
);

export default function App() {
  return (
    <>
      <GlobalStyle />
      <Window>
        <TitleRow />
        <Tabs />
        <RibbonView />
        <Formula />
        <SheetView />
        <SheetTabsView />
        <Status />
      </Window>
    </>
  );
}
